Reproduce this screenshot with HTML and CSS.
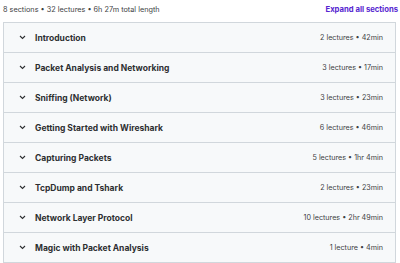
FILE: index.html
```html
<!DOCTYPE html>
<html lang="en">
<head>
  <meta charset="UTF-8" />
  <title>Course content</title>
  <link rel="stylesheet" href="styles.css">
</head>
<body>
  <div class="summary">
    <span class="totals">8 sections • 32 lectures • 6h 27m total length</span>
    <button class="expand">Expand all sections</button>
  </div>

  <div class="sections">
    <div class="section">
      <span class="chev"><svg width="7" height="5" viewBox="0 0 7 5"><path d="M1 1 L3.5 3.5 L6 1" fill="none" stroke="#2d2f31" stroke-width="1.1"/></svg></span>
      <span class="title">Introduction</span>
      <span class="meta">2 lectures • 42min</span>
    </div>
    <div class="section">
      <span class="chev"><svg width="7" height="5" viewBox="0 0 7 5"><path d="M1 1 L3.5 3.5 L6 1" fill="none" stroke="#2d2f31" stroke-width="1.1"/></svg></span>
      <span class="title">Packet Analysis and Networking</span>
      <span class="meta">3 lectures • 17min</span>
    </div>
    <div class="section">
      <span class="chev"><svg width="7" height="5" viewBox="0 0 7 5"><path d="M1 1 L3.5 3.5 L6 1" fill="none" stroke="#2d2f31" stroke-width="1.1"/></svg></span>
      <span class="title">Sniffing (Network)</span>
      <span class="meta">3 lectures • 23min</span>
    </div>
    <div class="section">
      <span class="chev"><svg width="7" height="5" viewBox="0 0 7 5"><path d="M1 1 L3.5 3.5 L6 1" fill="none" stroke="#2d2f31" stroke-width="1.1"/></svg></span>
      <span class="title">Getting Started with Wireshark</span>
      <span class="meta">6 lectures • 46min</span>
    </div>
    <div class="section">
      <span class="chev"><svg width="7" height="5" viewBox="0 0 7 5"><path d="M1 1 L3.5 3.5 L6 1" fill="none" stroke="#2d2f31" stroke-width="1.1"/></svg></span>
      <span class="title">Capturing Packets</span>
      <span class="meta">5 lectures • 1hr 4min</span>
    </div>
    <div class="section">
      <span class="chev"><svg width="7" height="5" viewBox="0 0 7 5"><path d="M1 1 L3.5 3.5 L6 1" fill="none" stroke="#2d2f31" stroke-width="1.1"/></svg></span>
      <span class="title">TcpDump and Tshark</span>
      <span class="meta">2 lectures • 23min</span>
    </div>
    <div class="section">
      <span class="chev"><svg width="7" height="5" viewBox="0 0 7 5"><path d="M1 1 L3.5 3.5 L6 1" fill="none" stroke="#2d2f31" stroke-width="1.1"/></svg></span>
      <span class="title">Network Layer Protocol</span>
      <span class="meta">10 lectures • 2hr 49min</span>
    </div>
    <div class="section">
      <span class="chev"><svg width="7" height="5" viewBox="0 0 7 5"><path d="M1 1 L3.5 3.5 L6 1" fill="none" stroke="#2d2f31" stroke-width="1.1"/></svg></span>
      <span class="title">Magic with Packet Analysis</span>
      <span class="meta">1 lecture • 4min</span>
    </div>
  </div>
</body>
</html>
```

FILE: styles.css
```css
body {
  margin: 0;
  background: #fff;
  font-family: Inter, "Noto Sans", sans-serif;
  color: #2d2f31;
}
.summary {
  display: flex;
  justify-content: space-between;
  align-items: center;
  height: 18px;
  margin-bottom: 4px;
  padding: 0 2px 0 3px;
}
.totals {
  font-size: 7.3px;
  color: #3e4143;
}
.expand {
  border: none;
  background: none;
  padding: 0;
  font-family: inherit;
  font-size: 7.7px;
  font-weight: 700;
  color: #5624d0;
  cursor: pointer;
}
.sections {
  margin: 0 4px 0 3px;
  border: 1px solid #d1d7dc;
  border-bottom: none;
}
.section {
  display: flex;
  align-items: center;
  height: 29px;
  padding: 0 12px 0 15px;
  background: #f7f9fa;
  border-bottom: 1px solid #d1d7dc;
}
.chev {
  display: flex;
  width: 16px;
}
.title {
  flex: 1;
  font-size: 8.5px;
  font-weight: 700;
}
.meta {
  font-size: 7.2px;
  color: #3e4143;
}
```
